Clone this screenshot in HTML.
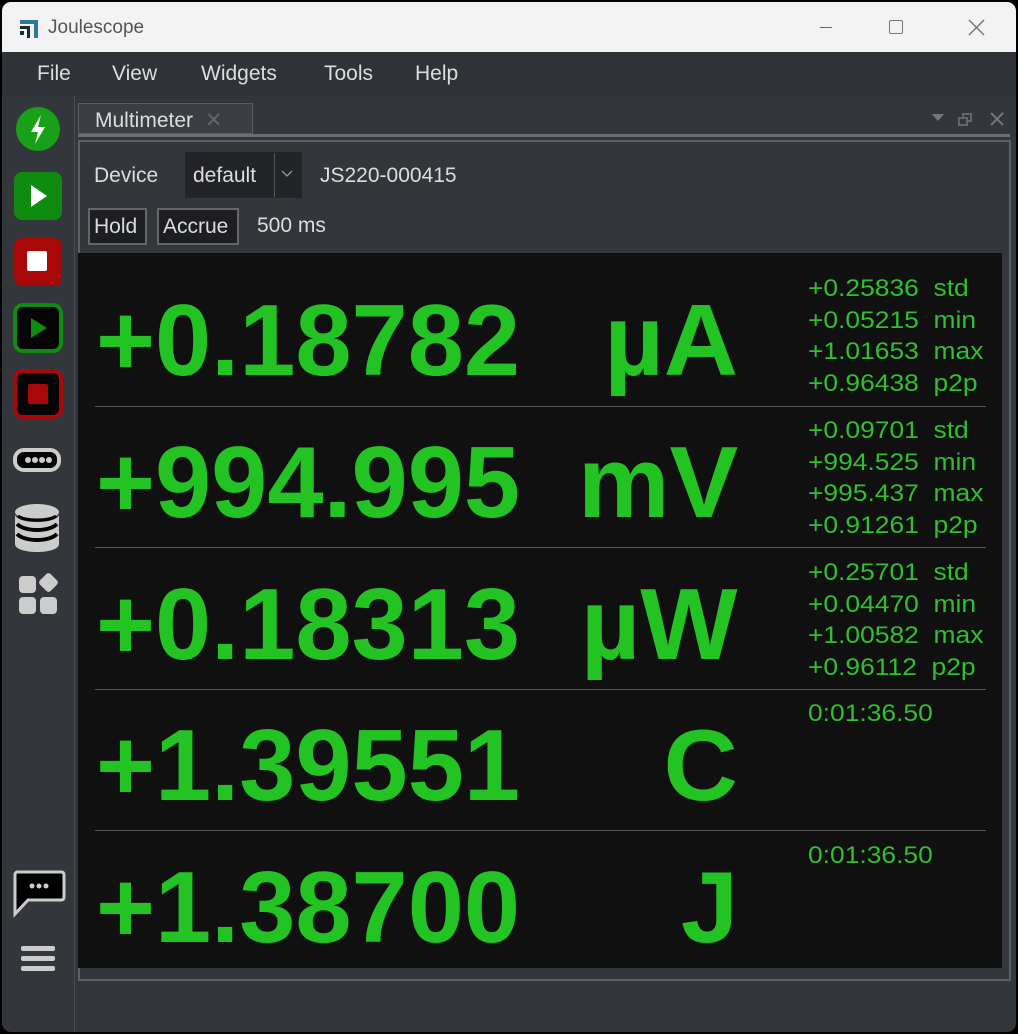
<!DOCTYPE html>
<html><head><meta charset="utf-8"><style>
*{margin:0;padding:0;box-sizing:border-box}
body{width:1018px;height:1034px;background:#000;font-family:"Liberation Sans",sans-serif;overflow:hidden;position:relative}
.win{position:absolute;left:2px;top:2px;width:1014px;height:1030px;border-radius:9px;overflow:hidden;background:#33363b}
.title{position:absolute;left:0;top:0;width:100%;height:50px;background:#f3f3f3}
.title .t{position:absolute;left:46px;top:15px;font-size:19px;color:#555}
.menu{position:absolute;top:50px;left:0;width:100%;height:44px;background:#2f3237;color:#ddd;font-size:21px}
.menu span{position:absolute;top:10px}
.ab{position:absolute}
.big{position:absolute;color:#22c322;font-weight:bold;font-size:101px;transform:scaleX(1.0);transform-origin:left top;line-height:1;white-space:nowrap}
.unit{position:absolute;color:#22c322;font-weight:bold;font-size:101px;line-height:1;white-space:nowrap;transform:scaleX(1.02);transform-origin:right top;text-align:right;right:280px}
.st{position:absolute;color:#2fbf2f;font-size:24px;line-height:31.6px;white-space:pre;left:808px;transform:scaleX(1.1);transform-origin:left top}
.sep{position:absolute;left:95px;width:891px;height:1px;background:#555}
</style></head><body>
<div class="win">
<div class="title">
<svg class="ab" style="left:16px;top:15px" width="22" height="22" viewBox="0 0 22 22"><path d="M2 3h18v18h-4V7H2z" fill="#2a7a9a"/><path d="M2 9h10v12H9v-9H2z" fill="#1a2a3a"/><rect x="2" y="14" width="4" height="4" fill="#1a2a3a"/></svg>
<div class="t">Joulescope</div>
<div class="ab" style="left:818px;top:25px;width:12px;height:1px;background:#666"></div>
<div class="ab" style="left:887px;top:18px;width:14px;height:14px;border:1.5px solid #777;border-radius:2px"></div>
<svg class="ab" style="left:966px;top:17px" width="17" height="17"><path d="M1 1L16 16M16 1L1 16" stroke="#777" stroke-width="1.5"/></svg>
</div>
<div class="menu"><span style="left:35px">File</span><span style="left:110px">View</span><span style="left:199px">Widgets</span><span style="left:322px">Tools</span><span style="left:413px">Help</span></div>
<div class="ab" style="left:72px;top:94px;width:1px;height:940px;background:#4a4d52"></div>
<svg class="ab" style="left:12px;top:104px" width="48" height="48"><circle cx="24" cy="23" r="22" fill="#18a018"/><path d="M27 9L17 26h7l-3 12 10-17h-7z" fill="#fff"/></svg>
<svg class="ab" style="left:10px;top:168px" width="52" height="52"><rect x="2" y="2" width="48" height="48" rx="8" fill="#0e8a0e"/><path d="M19 15l16 11-16 11z" fill="#fff"/></svg>
<svg class="ab" style="left:10px;top:234px" width="52" height="52"><rect x="2" y="2" width="48" height="48" rx="8" fill="#a80808"/><rect x="15" y="15" width="20" height="20" rx="2" fill="#fff"/></svg>
<svg class="ab" style="left:10px;top:300px" width="52" height="52"><rect x="3" y="3" width="46" height="46" rx="8" fill="#050505" stroke="#108a10" stroke-width="4"/><path d="M19 16l16 10-16 10z" fill="#108a10"/></svg>
<svg class="ab" style="left:10px;top:366px" width="52" height="52"><rect x="3" y="3" width="46" height="46" rx="8" fill="#050505" stroke="#a80808" stroke-width="4"/><rect x="16" y="16" width="20" height="20" rx="2" fill="#a80808"/></svg>
<svg class="ab" style="left:10px;top:444px" width="52" height="30"><rect x="3" y="4" width="44" height="20" rx="9" fill="#050505" stroke="#ccc" stroke-width="4"/><circle cx="16" cy="14" r="3" fill="#ccc"/><circle cx="23" cy="14" r="3" fill="#ccc"/><circle cx="30" cy="14" r="3" fill="#ccc"/><circle cx="37" cy="14" r="3" fill="#ccc"/></svg>
<svg class="ab" style="left:10px;top:500px" width="52" height="52"><ellipse cx="25" cy="10" rx="22" ry="8" fill="#ccc"/><path d="M3 12v30c0 5 10 8 22 8s22-3 22-8V12c0 5-10 8-22 8S3 17 3 12z" fill="#ccc"/><path d="M5 22c4 4 12 6 20 6s16-2 20-6M5 32c4 4 12 6 20 6s16-2 20-6" stroke="#050505" stroke-width="4" fill="none"/><path d="M6 14c4 3 11 4 19 4s15-1 19-4" stroke="#050505" stroke-width="3" fill="none"/></svg>
<svg class="ab" style="left:14px;top:570px" width="46" height="46"><rect x="3" y="4" width="17" height="17" rx="4" fill="#ccc"/><rect x="3" y="25" width="17" height="17" rx="4" fill="#ccc"/><rect x="24" y="25" width="17" height="17" rx="4" fill="#ccc"/><rect x="25" y="3" width="15" height="15" rx="3" fill="#ccc" transform="rotate(45 32.5 10.5)"/></svg>
<svg class="ab" style="left:10px;top:866px" width="54" height="50"><path d="M5 4h44c2 0 3 1 3 3v22c0 2-1 3-3 3H16L3 46V7c0-2 1-3 2-3z" fill="#000" stroke="#ccc" stroke-width="3"/><circle cx="20" cy="18" r="2.5" fill="#ccc"/><circle cx="27" cy="18" r="2.5" fill="#ccc"/><circle cx="34" cy="18" r="2.5" fill="#ccc"/></svg>
<svg class="ab" style="left:17px;top:942px" width="40" height="30"><rect x="2" y="2" width="34" height="5" rx="2" fill="#ccc"/><rect x="2" y="12" width="34" height="5" rx="2" fill="#ccc"/><rect x="2" y="22" width="34" height="5" rx="2" fill="#ccc"/></svg>
<div class="ab" style="left:76px;top:101px;width:175px;height:31px;border:1px solid #5a5d62;background:#3a3d42;color:#ddd;font-size:21px;padding:4px 0 0 16px">Multimeter <span style="color:#666;margin-left:6px">✕</span></div>
<div class="ab" style="left:76px;top:132px;width:932px;height:3px;background:#6a6d72"></div>
<div class="ab" style="left:930px;top:112px;width:0;height:0;border-left:6px solid transparent;border-right:6px solid transparent;border-top:7px solid #777"></div>
<div class="ab" style="left:960px;top:111px;width:10px;height:9px;border:2px solid #666"></div>
<div class="ab" style="left:956px;top:115px;width:10px;height:9px;border:2px solid #666;background:#33363b"></div>
<svg class="ab" style="left:987px;top:109px" width="16" height="16"><path d="M2 2L14 14M14 2L2 14" stroke="#777" stroke-width="2"/></svg>
<div class="ab" style="left:76px;top:138px;width:933px;height:841px;border:2px solid #5d6065"></div>
<div class="ab" style="left:92px;top:162px;font-size:21px;color:#ddd">Device</div>
<div class="ab" style="left:183px;top:150px;width:117px;height:46px;background:#222428"></div>
<div class="ab" style="left:191px;top:162px;font-size:21px;color:#ddd">default</div>
<div class="ab" style="left:272px;top:151px;width:1px;height:44px;background:#555"></div>
<svg class="ab" style="left:279px;top:168px" width="12" height="8"><path d="M1 1l5 5 5-5" stroke="#999" fill="none" stroke-width="1.3"/></svg>
<div class="ab" style="left:318px;top:162px;font-size:21px;color:#ddd">JS220-000415</div>
<div class="ab" style="left:86px;top:206px;width:59px;height:37px;border:2px solid #666;background:#1c1e22;color:#ddd;font-size:21px;padding:5px 0 0 4px">Hold</div>
<div class="ab" style="left:155px;top:206px;width:82px;height:37px;border:2px solid #666;background:#1c1e22;color:#ddd;font-size:21px;padding:5px 0 0 4px">Accrue</div>
<div class="ab" style="left:255px;top:212px;font-size:21px;color:#ddd">500 ms</div>
<div class="ab" style="left:76px;top:251px;width:924px;height:715px;background:#101010"></div>
</div>
<div class="big" style="left:96px;top:291px">+0.18782</div><div class="unit" style="top:291px">µA</div>
<div class="st" style="top:273px">+0.25836  std
+0.05215  min
+1.01653  max
+0.96438  p2p</div>
<div class="sep" style="top:406px"></div>
<div class="big" style="left:96px;top:433px">+994.995</div><div class="unit" style="top:433px">mV</div>
<div class="st" style="top:415px">+0.09701  std
+994.525  min
+995.437  max
+0.91261  p2p</div>
<div class="sep" style="top:547px"></div>
<div class="big" style="left:96px;top:575px">+0.18313</div><div class="unit" style="top:575px">µW</div>
<div class="st" style="top:557px">+0.25701  std
+0.04470  min
+1.00582  max
+0.96112  p2p</div>
<div class="sep" style="top:689px"></div>
<div class="big" style="left:96px;top:716px">+1.39551</div><div class="unit" style="top:716px">C</div>
<div class="st" style="top:698px">0:01:36.50</div>
<div class="sep" style="top:830px"></div>
<div class="big" style="left:96px;top:858px">+1.38700</div><div class="unit" style="top:858px">J</div>
<div class="st" style="top:840px">0:01:36.50</div>
</body></html>
